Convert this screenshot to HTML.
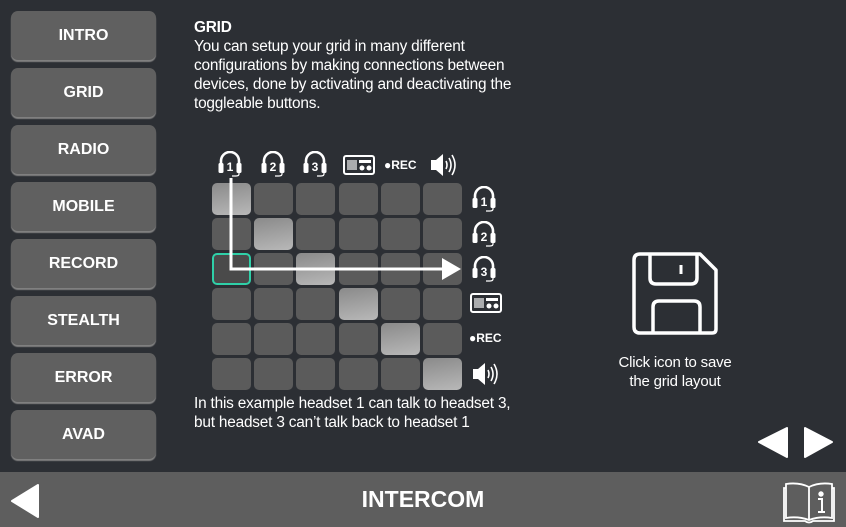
<!DOCTYPE html>
<html><head><meta charset="utf-8"><style>
*{margin:0;padding:0;box-sizing:border-box}
body{width:846px;height:527px;background:#2c2f34;font-family:"Liberation Sans",sans-serif;color:#fff;position:relative;overflow:hidden}
.btn{position:absolute;left:11px;width:145px;height:49px;background:#606060;border-radius:7px;box-shadow:0 2px 1px #808080;font-weight:bold;font-size:16px;text-align:center;line-height:49px}
.txt{position:absolute;left:194px;font-size:15.4px;line-height:19px;letter-spacing:-0.2px;white-space:nowrap}
.cell{position:absolute;width:39px;height:32px;border-radius:5px;background:#5b5b5b}
.on{background:linear-gradient(170deg,#8a8a8a,#b8b8b8)}
.ic{position:absolute}
.rec{position:absolute;font-size:12px;font-weight:bold}
.bar{position:absolute;left:0;top:472px;width:846px;height:55px;background:#5e5e5e}
</style></head><body>
<div class="btn" style="top:11px">INTRO</div>
<div class="btn" style="top:68px">GRID</div>
<div class="btn" style="top:125px">RADIO</div>
<div class="btn" style="top:182px">MOBILE</div>
<div class="btn" style="top:239px">RECORD</div>
<div class="btn" style="top:296px">STEALTH</div>
<div class="btn" style="top:353px">ERROR</div>
<div class="btn" style="top:410px">AVAD</div>

<div class="txt" style="top:18px"><b>GRID</b><br>You can setup your grid in many different<br>configurations by making connections between<br>devices, done by activating and deactivating the<br>toggleable buttons.</div>
<div class="txt" style="top:394px">In this example headset 1 can talk to headset 3,<br>but headset 3 can’t talk back to headset 1</div>

<svg width="0" height="0" style="position:absolute"><defs>
<g id="hs"><path d="M3 13 V10 A9 9 0 0 1 21 10 V13" fill="none" stroke="#fff" stroke-width="2.6"/><rect x="0.5" y="12" width="5" height="10" rx="1.5" fill="#fff"/><rect x="18.5" y="12" width="5" height="10" rx="1.5" fill="#fff"/><path d="M21 21 V23 Q21 25 18 25 H14" fill="none" stroke="#fff" stroke-width="1.2"/></g>
<g id="radio"><rect x="1" y="1" width="30" height="18" rx="2" fill="none" stroke="#fff" stroke-width="2"/><path d="M5 5V15M7 5V15M9 5V15M11 5V15M13 5V15" stroke="#fff" stroke-width="1.2"/><rect x="16" y="5" width="12" height="3" fill="#fff"/><circle cx="19" cy="13" r="2.5" fill="#fff"/><circle cx="26" cy="13" r="2.5" fill="#fff"/></g>
<g id="spk"><path d="M1 8H6L13 2V24L6 18H1Z" fill="#fff"/><path d="M16 9Q18 13 16 17M19 6Q23 13 19 20M22 3Q28 13 22 23" fill="none" stroke="#fff" stroke-width="1.6"/></g>
</defs></svg>

<svg class="ic" style="left:218px;top:151px" width="26" height="28"><use href="#hs"/><text x="12" y="20" font-size="12" font-weight="bold" fill="#fff" text-anchor="middle" font-family="Liberation Sans">1</text></svg>
<svg class="ic" style="left:261px;top:151px" width="26" height="28"><use href="#hs"/><text x="12" y="20" font-size="12" font-weight="bold" fill="#fff" text-anchor="middle" font-family="Liberation Sans">2</text></svg>
<svg class="ic" style="left:303px;top:151px" width="26" height="28"><use href="#hs"/><text x="12" y="20" font-size="12" font-weight="bold" fill="#fff" text-anchor="middle" font-family="Liberation Sans">3</text></svg>
<svg class="ic" style="left:343px;top:155px" width="32" height="20"><use href="#radio"/></svg>
<div class="rec" style="left:384px;top:158px">●REC</div>
<svg class="ic" style="left:430px;top:152px" width="28" height="26"><use href="#spk"/></svg>

<svg class="ic" style="left:472px;top:186px" width="26" height="28"><use href="#hs"/><text x="12" y="20" font-size="12" font-weight="bold" fill="#fff" text-anchor="middle" font-family="Liberation Sans">1</text></svg>
<svg class="ic" style="left:472px;top:221px" width="26" height="28"><use href="#hs"/><text x="12" y="20" font-size="12" font-weight="bold" fill="#fff" text-anchor="middle" font-family="Liberation Sans">2</text></svg>
<svg class="ic" style="left:472px;top:256px" width="26" height="28"><use href="#hs"/><text x="12" y="20" font-size="12" font-weight="bold" fill="#fff" text-anchor="middle" font-family="Liberation Sans">3</text></svg>
<svg class="ic" style="left:470px;top:293px" width="32" height="20"><use href="#radio"/></svg>
<div class="rec" style="left:469px;top:331px">●REC</div>
<svg class="ic" style="left:472px;top:361px" width="28" height="26"><use href="#spk"/></svg>

<div id="g"></div>
<script>
var g=document.getElementById('g'),h='';
for(var r=0;r<6;r++)for(var c=0;c<6;c++){
var x=212+c*42.2,y=183+r*35;var cls='cell'+(r==c?' on':'');
var st='left:'+x+'px;top:'+y+'px;';
if(r==2&&c==0)st+='border:2px solid #2fd0a8;background:#4a4a4a;';
h+='<div class="'+cls+'" style="'+st+'"></div>';}
g.innerHTML=h;
</script>
<svg class="ic" style="left:0;top:0" width="846" height="527">
<path d="M231 178 V269 H442" fill="none" stroke="#fff" stroke-width="3"/>
<path d="M442 258 L461 269 L442 280Z" fill="#fff"/>
</svg>

<svg class="ic" style="left:632px;top:252px" width="88" height="86" fill="none" stroke="#fff" stroke-width="3.5" stroke-linejoin="round">
<path d="M8 2H68L84 18V77Q84 81 80 81H8Q2 81 2 75V8Q2 2 8 2Z"/>
<path d="M18 2V26Q18 32 24 32H59Q65 32 65 26V2"/>
<path d="M21 81V55Q21 49 27 49H62Q68 49 68 55V81"/>
<path d="M49 13V22" stroke-width="3"/>
</svg>
<div style="position:absolute;left:585px;width:180px;top:353px;text-align:center;font-size:15px;line-height:19px;letter-spacing:-0.2px">Click icon to save<br>the grid layout</div>

<svg class="ic" style="left:758px;top:426px" width="80" height="34" fill="#fff">
<path d="M1 16 L29 2 V31Z" stroke="#fff" stroke-width="2" stroke-linejoin="round"/>
<path d="M47 2 L74 16 L47 31Z" stroke="#fff" stroke-width="2" stroke-linejoin="round"/>
</svg>

<div class="bar"></div>
<svg class="ic" style="left:10px;top:483px" width="30" height="36"><path d="M2 18L28 2V34Z" fill="#fff" stroke="#fff" stroke-width="2" stroke-linejoin="round"/></svg>
<div style="position:absolute;left:0;width:846px;top:486px;text-align:center;font-size:23px;font-weight:bold">INTERCOM</div>
<svg class="ic" style="left:783px;top:478px" width="52" height="46" fill="none" stroke="#fff" stroke-width="1.8">
<path d="M26 9Q16 4 3 6V40Q15 38 26 42Q37 38 49 40V6Q36 4 26 9Z"/>
<path d="M26 9V42"/>
<path d="M3 10H1V43H22Q26 46 30 43H51V10H49"/>
<circle cx="38" cy="16" r="1.8" fill="#fff"/>
<path d="M35 21H39V34M35 34H42" stroke-width="2"/>
</svg>
</body></html>
